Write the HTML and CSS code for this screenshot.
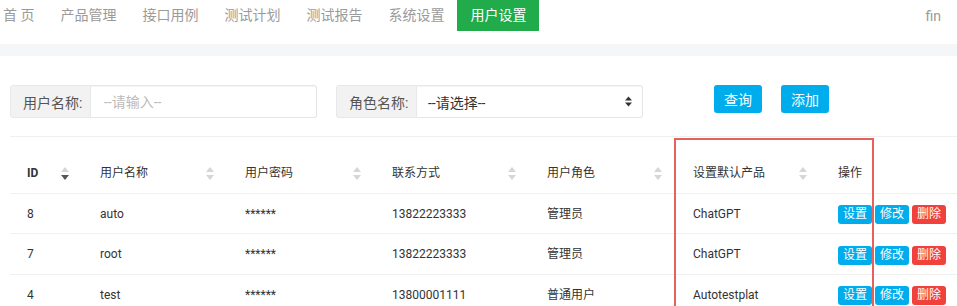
FILE: index.html
```html
<!DOCTYPE html>
<html>
<head>
	<meta charset="utf-8">
	<meta name="viewport" content="width=device-width, initial-scale=1">
	<link rel="stylesheet" href="styles.css">
</head>
<body>
	<header class="topnav">
		<ul class="menu">
			<li>首 页</li>
			<li>产品管理</li>
			<li>接口用例</li>
			<li>测试计划</li>
			<li>测试报告</li>
			<li>系统设置</li>
			<li class="active">用户设置</li>
		</ul>
		<span class="user">fin</span>
	</header>
	<div class="band"></div>

	<main class="content">
		<form class="search">
			<div class="field">
				<span class="addon">用户名称:</span>
				<input class="input" type="text" placeholder="--请输入--">
			</div>
			<div class="field">
				<span class="addon">角色名称:</span>
				<div class="input select">
					<span>--请选择--</span>
					<svg width="7" height="11" viewBox="0 0 7 11"><path d="M0 4.5 L3.5 0.5 L7 4.5 Z M0 6.5 L3.5 10.5 L7 6.5 Z" fill="#333"/></svg>
				</div>
			</div>
			<button type="button" class="btn first">查询</button>
			<button type="button" class="btn">添加</button>
		</form>

		<div class="table-wrap">
			<table class="users">
				<colgroup>
					<col style="width:73px">
					<col style="width:145px">
					<col style="width:147px">
					<col style="width:155px">
					<col style="width:146px">
					<col style="width:145px">
					<col>
				</colgroup>
				<thead>
					<tr>
						<th><div class="th"><b>ID</b><i class="sort desc"></i></div></th>
						<th><div class="th">用户名称<i class="sort"></i></div></th>
						<th><div class="th">用户密码<i class="sort"></i></div></th>
						<th><div class="th">联系方式<i class="sort"></i></div></th>
						<th><div class="th">用户角色<i class="sort"></i></div></th>
						<th><div class="th">设置默认产品<i class="sort"></i></div></th>
						<th><div class="th">操作</div></th>
					</tr>
				</thead>
				<tbody>
					<tr>
						<td>8</td><td>auto</td><td>******</td><td>13822223333</td><td>管理员</td><td>ChatGPT</td>
						<td><span class="mini blue">设置</span><span class="mini blue">修改</span><span class="mini red">删除</span></td>
					</tr>
					<tr>
						<td>7</td><td>root</td><td>******</td><td>13822223333</td><td>管理员</td><td>ChatGPT</td>
						<td><span class="mini blue">设置</span><span class="mini blue">修改</span><span class="mini red">删除</span></td>
					</tr>
					<tr>
						<td>4</td><td>test</td><td>******</td><td>13800001111</td><td>普通用户</td><td>Autotestplat</td>
						<td><span class="mini blue">设置</span><span class="mini blue">修改</span><span class="mini red">删除</span></td>
					</tr>
				</tbody>
			</table>
			<div class="mark"></div>
		</div>
	</main>
</body>
</html>
```

FILE: styles.css
```css
body {
	margin: 0;
	font-family: Roboto, "Noto Sans CJK SC", sans-serif;
	color: #333;
	background: #fff;
	overflow: hidden;
}

/* top menu */
.topnav {
	display: flex;
	justify-content: space-between;
	align-items: center;
	height: 31px;
	font-size: 14px;
	color: #9a9a9a;
}

.menu {
	display: flex;
	margin: 0 0 0 -10px;
	padding: 0;
	list-style: none;
}

.menu li {
	padding: 0 13px;
	line-height: 31px;
	white-space: nowrap;
}

.menu li.active {
	background: #21ab4a;
	color: #fff;
}

.user {
	margin-right: 16px;
}

.band {
	margin-top: 13px;
	height: 12px;
	background: #f5f6f7;
}

.content {
	padding-left: 10px;
}

/* search form */
.search {
	display: flex;
	align-items: flex-start;
	margin-top: 29px;
	font-size: 14px;
}

.field {
	display: flex;
	height: 33px;
	margin-right: 19px;
}

.addon {
	display: flex;
	align-items: center;
	width: 81px;
	box-sizing: border-box;
	padding-left: 12px;
	background: #f2f2f2;
	border: 1px solid #e8e8e8;
	border-radius: 3px 0 0 3px;
	color: #555;
}

.input {
	width: 226px;
	box-sizing: border-box;
	height: 33px;
	padding: 0 13px;
	border: 1px solid #e6e6e6;
	border-left: none;
	border-radius: 0 3px 3px 0;
	font: inherit;
	color: #333;
	box-shadow: inset 0 1px 1px rgba(0,0,0,0.04);
	outline: none;
}

.input::placeholder {
	color: #bbb;
}

.select {
	display: flex;
	align-items: center;
	justify-content: space-between;
	padding: 0 10px 0 11px;
}

.btn {
	width: 48px;
	height: 28px;
	margin-right: 19px;
	padding: 0;
	border: none;
	border-radius: 3px;
	background: #00adec;
	color: #fff;
	font: inherit;
	font-size: 14px;
}

.btn.first {
	margin-left: 52px;
}

/* table */
.table-wrap {
	position: relative;
	margin-top: 18px;
}

.users {
	width: 947px;
	table-layout: fixed;
	border-collapse: collapse;
	font-size: 12px;
	border-top: 1px solid #f0f0f0;
}

.users th {
	padding: 26px 0 10px;
	font-weight: normal;
	text-align: left;
	line-height: 20px;
}

.th {
	display: flex;
	justify-content: space-between;
	align-items: center;
	padding: 0 14px 0 17px;
}

.th b {
	font-weight: bold;
}

.sort {
	position: relative;
	width: 8px;
	height: 13px;
}

.sort::before,
.sort::after {
	content: "";
	position: absolute;
	left: 0;
	border-left: 4px solid transparent;
	border-right: 4px solid transparent;
}

.sort::before {
	top: 0;
	border-bottom: 5px solid #d6d6d6;
}

.sort::after {
	bottom: 0;
	border-top: 5px solid #d6d6d6;
}

.sort.desc::after {
	border-top-color: #555;
}

.users td {
	padding: 10px 0 9px 17px;
	line-height: 20px;
	border-top: 1px solid #f0f0f0;
	white-space: nowrap;
}

.mini {
	display: inline-block;
	width: 34px;
	height: 19px;
	margin-right: 3px;
	line-height: 19px;
	text-align: center;
	border-radius: 3px;
	color: #fff;
	font-size: 12px;
	vertical-align: middle;
}

.mini.blue {
	background: #00adec;
}

.mini.red {
	background: #f0413d;
}

/* annotation box drawn over the table */
.mark {
	position: absolute;
	left: 664px;
	top: 2px;
	width: 200px;
	height: 220px;
	box-sizing: border-box;
	border: 2px solid #e5615c;
	border-bottom: none;
	pointer-events: none;
}
```
